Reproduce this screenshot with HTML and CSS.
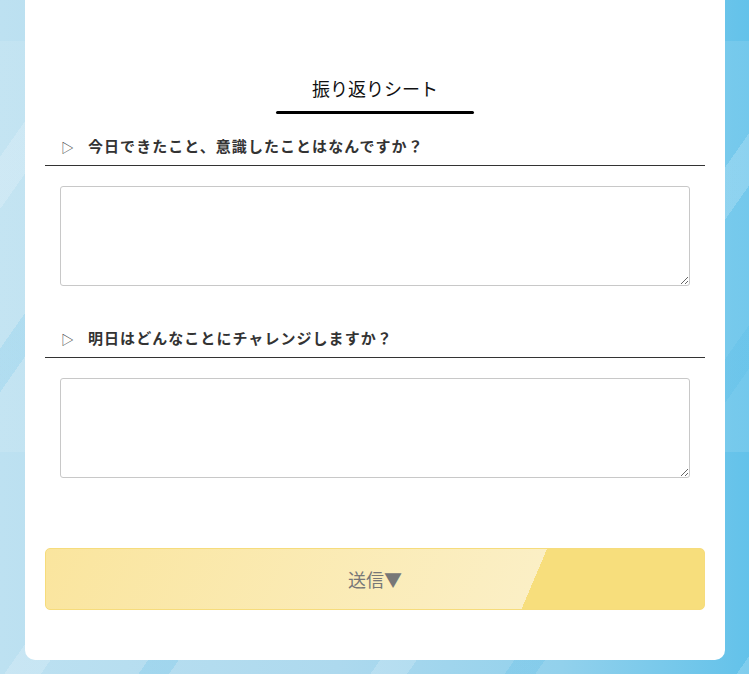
FILE: index.html
```html
<!DOCTYPE html>
<html lang="ja">
  <head>
    <meta charset="UTF-8" />
    <meta name="viewport" content="width=device-width, initial-scale=1.0" />
    <title>振り返りシート</title>
    <link rel="stylesheet" href="styles.css">
  </head>
  <body>
    <div class="page">
      <form class="sheet">
        <h2 class="sheet-title">振り返りシート</h2>

        <!-- 今日 -->
        <div class="question">
          <h3 class="question-label"><span class="mark">▷</span>今日できたこと、意識したことはなんですか？</h3>
          <textarea class="answer" name="today"></textarea>
        </div>

        <!-- 明日 -->
        <div class="question">
          <h3 class="question-label"><span class="mark">▷</span>明日はどんなことにチャレンジしますか？</h3>
          <textarea class="answer" name="tomorrow"></textarea>
        </div>

        <button type="button" class="submit">送信▼</button>
      </form>
    </div>
  </body>
</html>
```

FILE: styles.css
```css
:root {
  --text: #333;
  --line: #333;
  --card-bg: #fff;
}

* {
  box-sizing: border-box;
}

html,
body {
  height: 100%;
}

body {
  margin: 0;
  font-family: "Noto Sans CJK JP", "Noto Sans", sans-serif;
  color: var(--text);
  overflow: hidden;
  background:
    linear-gradient(180deg, rgba(255, 255, 255, 0) 0 41px, rgba(255, 255, 255, 0.1) 41px 452px, rgba(255, 255, 255, 0) 452px),
    repeating-linear-gradient(125deg, rgba(255, 255, 255, 0) 0 90px, rgba(255, 255, 255, 0.18) 90px 120px, rgba(255, 255, 255, 0) 120px 200px, rgba(40, 170, 225, 0.14) 200px 225px, rgba(255, 255, 255, 0) 225px 300px),
    linear-gradient(90deg, #bde1f1 0%, #add9ee 45%, #92d1ec 75%, #63c2ea 100%);
}

.page {
  padding: 0 24px 0 25px;
}

.sheet {
  background: var(--card-bg);
  border-radius: 0 0 10px 10px;
  padding: 75px 20px 50px;
}

.sheet-title {
  width: 198px;
  margin: 0 auto;
  font-size: 18px;
  font-weight: normal;
  line-height: 27px;
  text-align: center;
  color: #111;
}

.sheet-title::after {
  content: "";
  display: block;
  height: 3px;
  border-radius: 2px;
  background: #000;
  margin-top: 9px;
}

.question {
  margin-top: 20px;
}

.question + .question {
  margin-top: 40px;
}

.question-label {
  margin: 0;
  padding: 0 0 6px 16px;
  font-size: 15px;
  line-height: 24px;
  font-weight: bold;
  letter-spacing: 0.07em;
  color: var(--text);
  border-bottom: 1px solid var(--line);
}

.mark {
  font-weight: normal;
  font-size: 13px;
  color: #444;
  letter-spacing: 0;
  margin-right: 14px;
}

.answer {
  display: block;
  width: calc(100% - 30px);
  height: 100px;
  margin: 20px 15px 0;
  padding: 8px;
  border: 1px solid #c8c8c8;
  border-radius: 3px;
  font-family: inherit;
  font-size: 14px;
}

.submit {
  display: block;
  width: 100%;
  height: 62px;
  margin-top: 70px;
  border: 1px solid #f6dc7c;
  border-radius: 5px;
  font-family: inherit;
  font-size: 18px;
  color: #777;
  cursor: pointer;
  background: linear-gradient(113deg, #fae59e 0%, #fbefc5 73.3%, #f7de7c 73.3%, #f7de7c 100%);
}
```
